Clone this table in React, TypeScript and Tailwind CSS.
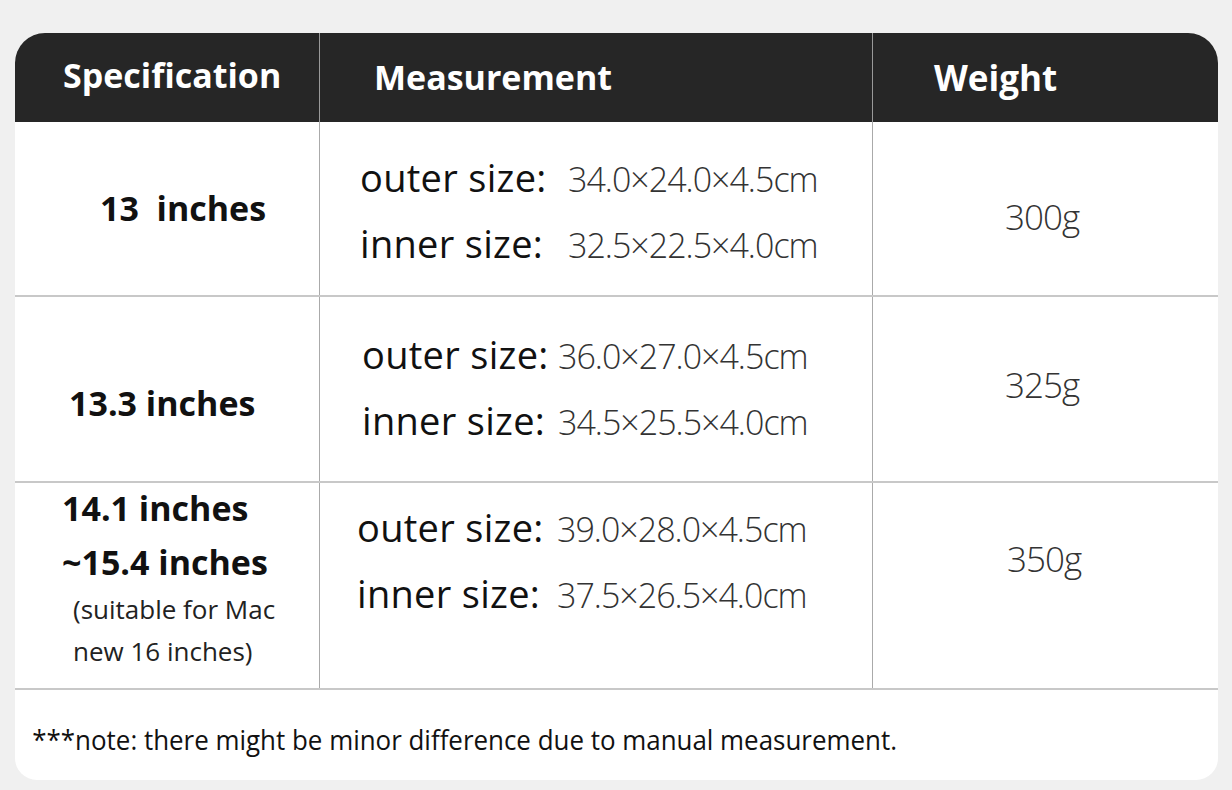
export default function App() {
  const label = 'text-[38px] text-[#111] leading-[66px] tracking-[0.3px]';
  const value = 'text-[34px] font-light text-[#333] tracking-[-1px]';
  const weight = 'text-[35px] font-light text-[#333] tracking-[-1px]';
  const spec = 'text-[34px] font-bold text-[#111]';
  return (
    <div className="min-h-screen w-full bg-[#f0f0f0] pt-[33px] pl-[15px]" style={{ fontFamily: '"Open Sans", "Noto Sans", sans-serif' }}>
      <div className="w-[1203px] h-[747px] bg-white rounded-t-[30px] rounded-b-[22px] overflow-hidden">
        {/* header */}
        <div className="grid grid-cols-[305px_553px_1fr] h-[89px] bg-[#262626] text-white text-[34px] font-bold">
          <div className="pl-[48px] pt-[17px] border-r border-[#999]">Specification</div>
          <div className="pl-[54px] pt-[19px] border-r border-[#999]">Measurement</div>
          <div className="pl-[61px] pt-[19px] text-[35px]">Weight</div>
        </div>

        {/* row 1 */}
        <div className="grid grid-cols-[305px_553px_1fr] h-[175px] border-b-2 border-[#c8c8c8]">
          <div className={`border-r border-[#aaa] pl-[85px] pt-[61px] ${spec}`}>13&nbsp; inches</div>
          <div className="border-r border-[#aaa] pl-[40px] pt-[22px]">
            <div className="flex items-baseline">
              <span className={`${label} w-[208px]`}>outer size:</span>
              <span className={value}>34.0×24.0×4.5cm</span>
            </div>
            <div className="flex items-baseline">
              <span className={`${label} w-[208px]`}>inner size:</span>
              <span className={value}>32.5×22.5×4.0cm</span>
            </div>
          </div>
          <div className={`pl-[132px] pt-[69px] ${weight}`}>300g</div>
        </div>

        {/* row 2 */}
        <div className="grid grid-cols-[305px_553px_1fr] h-[186px] border-b-2 border-[#c8c8c8]">
          <div className={`border-r border-[#aaa] pl-[54px] pt-[81px] ${spec}`}>13.3 inches</div>
          <div className="border-r border-[#aaa] pl-[42px] pt-[24px]">
            <div className="flex items-baseline">
              <span className={`${label} w-[196px]`}>outer size:</span>
              <span className={value}>36.0×27.0×4.5cm</span>
            </div>
            <div className="flex items-baseline">
              <span className={`${label} w-[196px]`}>inner size:</span>
              <span className={value}>34.5×25.5×4.0cm</span>
            </div>
          </div>
          <div className={`pl-[132px] pt-[62px] ${weight}`}>325g</div>
        </div>

        {/* row 3 */}
        <div className="grid grid-cols-[305px_553px_1fr] h-[207px] border-b-2 border-[#c8c8c8]">
          <div className="border-r border-[#aaa] pl-[47px] pt-[0px] text-[#111]">
            <div className={`${spec} leading-[50px]`}>14.1 inches</div>
            <div className={`${spec} leading-[60px] -mt-[1px]`}>~15.4 inches</div>
            <div className="pl-[11px] text-[26px] text-[#222] leading-[42px] -mt-[4px]">(suitable for Mac</div>
            <div className="pl-[11px] text-[26px] text-[#222] leading-[42px]">new 16 inches)</div>
          </div>
          <div className="border-r border-[#aaa] pl-[37px] pt-[11px]">
            <div className="flex items-baseline">
              <span className={`${label} w-[200px]`}>outer size:</span>
              <span className={value}>39.0×28.0×4.5cm</span>
            </div>
            <div className="flex items-baseline">
              <span className={`${label} w-[200px]`}>inner size:</span>
              <span className={value}>37.5×26.5×4.0cm</span>
            </div>
          </div>
          <div className={`pl-[134px] pt-[50px] ${weight}`}>350g</div>
        </div>

        {/* note */}
        <div className="pl-[18px] pt-[30px] text-[27px] text-[#111] scale-x-[0.96] origin-left whitespace-nowrap">
          ***note: there might be minor difference due to manual measurement.
        </div>
      </div>
    </div>
  );
}
